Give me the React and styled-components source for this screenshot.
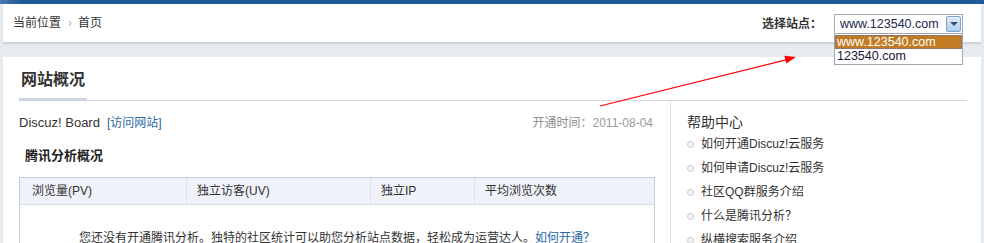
import styled, { createGlobalStyle } from 'styled-components';

const GlobalStyle = createGlobalStyle`
  body {
    margin: 0;
    background: #e8ecf1;
    font: 12px/1.5 'Liberation Sans', 'Noto Sans CJK SC', sans-serif;
    color: #333;
  }
`;

const helpItems = [
  '如何开通Discuz!云服务',
  '如何申请Discuz!云服务',
  '社区QQ群服务介绍',
  '什么是腾讯分析？',
  '纵横搜索服务介绍',
];

const columns = ['浏览量(PV)', '独立访客(UV)', '独立IP', '平均浏览次数'];

const App = () => {
  return (
    <Page>
      <GlobalStyle />
      <TopBar />
      <Wrap>
        <Header>
          <Crumbs>
            <span>当前位置</span>
            <Sep>›</Sep>
            <span>首页</span>
          </Crumbs>
          <SitePicker>
            <PickerLabel>选择站点：</PickerLabel>
            <Select>
              <SelectValue>www.123540.com</SelectValue>
              <SelectButton>
                <span />
              </SelectButton>
              <Options>
                <Option active>www.123540.com</Option>
                <Option>123540.com</Option>
              </Options>
            </Select>
          </SitePicker>
        </Header>

        <Panel>
          <TabBar>
            <Tab>网站概况</Tab>
          </TabBar>

          <Columns>
            <Main>
              <InfoRow>
                <div>
                  <BoardName>Discuz! Board</BoardName>
                  <VisitLink>[访问网站]</VisitLink>
                </div>
                <OpenDate>
                  开通时间：<span>2011-08-04</span>
                </OpenDate>
              </InfoRow>

              <SectionTitle>腾讯分析概况</SectionTitle>

              <Table>
                <HeadRow>
                  {columns.map((c) => (
                    <HeadCell key={c}>{c}</HeadCell>
                  ))}
                </HeadRow>
                <TableBody>
                  您还没有开通腾讯分析。独特的社区统计可以助您分析站点数据，轻松成为运营达人。
                  <BlueLink>如何开通？</BlueLink>
                </TableBody>
              </Table>
            </Main>

            <Side>
              <SideTitle>帮助中心</SideTitle>
              <HelpList>
                {helpItems.map((item) => (
                  <HelpItem key={item}>{item}</HelpItem>
                ))}
              </HelpList>
            </Side>
          </Columns>
        </Panel>
      </Wrap>

      <Arrow width="984" height="243" viewBox="0 0 984 243">
        <line x1="600" y1="106" x2="787" y2="59.6" stroke="#ff0000" strokeWidth="1.2" />
        <polygon points="796,57 784.3,55.8 786.3,63.6" fill="#ff0000" />
      </Arrow>
    </Page>
  );
};

const Page = styled.div`
  position: relative;
  min-height: 243px;
  overflow: hidden;
`;

const TopBar = styled.div`
  height: 4px;
  background: linear-gradient(90deg, #4a7bb0 0px, #1f5a98 20px, #1f5a98 100%);
`;

const Wrap = styled.div`
  padding: 0 3px;
`;

const Header = styled.div`
  display: flex;
  justify-content: space-between;
  align-items: center;
  height: 38px;
  padding: 0 18px 0 10px;
  background: #fff;
  box-shadow: 0 2px 2px rgba(0, 0, 0, 0.13);
`;

const Crumbs = styled.div`
  display: flex;
  align-items: center;
  font-size: 12px;
  color: #333;
`;

const Sep = styled.span`
  margin: 0 6px 0 7px;
  color: #b5b5b5;
`;

const SitePicker = styled.div`
  display: flex;
  align-items: center;
  margin-top: 2px;
`;

const PickerLabel = styled.span`
  font-weight: bold;
  color: #333;
  margin-right: 12px;
`;

const Select = styled.div`
  position: relative;
  display: flex;
  align-items: center;
  justify-content: space-between;
  box-sizing: border-box;
  width: 129px;
  height: 20px;
  border: 1px solid #a5acb6;
  background: #fff;
`;

const SelectValue = styled.span`
  padding-left: 5px;
  font-size: 12.5px;
  line-height: 18px;
  color: #23284a;
`;

const SelectButton = styled.div`
  display: flex;
  align-items: center;
  justify-content: center;
  box-sizing: border-box;
  width: 15px;
  height: 16px;
  margin-right: 1px;
  border: 1px solid #7fa5cf;
  border-radius: 2px;
  background: linear-gradient(#e2eefa, #aecdee);

  span {
    width: 0;
    height: 0;
    border-left: 4px solid transparent;
    border-right: 4px solid transparent;
    border-top: 4px solid #3b4d72;
  }
`;

const Options = styled.div`
  position: absolute;
  top: 18px;
  left: -1px;
  box-sizing: border-box;
  width: 129px;
  padding: 1px 0 1px;
  border: 1px solid #a2a8b1;
  background: #fff;
  z-index: 2;
`;

const Option = styled.div`
  height: 14px;
  padding-left: 2px;
  font-size: 12.5px;
  line-height: 14px;
  color: ${(p) => (p.active ? '#fff' : '#221436')};
  background: ${(p) => (p.active ? '#c27b22' : '#fff')};
  outline: ${(p) => (p.active ? '1px dotted #5e79ad' : 'none')};
  outline-offset: -1px;
`;

const Panel = styled.div`
  margin-top: 15px;
  padding: 0 14px 0 16px;
  background: #fff;
`;

const TabBar = styled.div`
  height: 43px;
  border-bottom: 1px solid #d3d9e3;
`;

const Tab = styled.div`
  width: 68px;
  height: 41px;
  line-height: 46px;
  text-align: center;
  font-size: 16px;
  font-weight: bold;
  color: #333;
  border-bottom: 3px solid #cdd5e2;
`;

const Columns = styled.div`
  display: flex;
  align-items: stretch;
`;

const Main = styled.div`
  width: 636px;
  margin-right: 15px;
`;

const InfoRow = styled.div`
  display: flex;
  justify-content: space-between;
  align-items: center;
  height: 24px;
  margin-top: 10px;
`;

const BoardName = styled.span`
  font-size: 13px;
  color: #333;
`;

const VisitLink = styled.a`
  margin-left: 7px;
  color: #2b66a6;
  text-decoration: none;
  cursor: pointer;
`;

const OpenDate = styled.span`
  margin-right: 2px;
  color: #8c8c8c;

  span {
    color: #999;
  }
`;

const SectionTitle = styled.div`
  height: 22px;
  margin-top: 10px;
  padding-left: 6px;
  line-height: 22px;
  font-size: 13px;
  font-weight: bold;
  color: #222;
`;

const Table = styled.div`
  margin-top: 10px;
  border: 1px solid #c4cce0;
`;

const HeadRow = styled.div`
  display: grid;
  grid-template-columns: 166px 184px 104px 1fr;
  height: 26px;
  background: #eff2f9;
  border-bottom: 1px solid #d6dcea;
`;

const HeadCell = styled.div`
  padding-left: 10px;
  line-height: 26px;
  color: #333;
  border-left: 1px solid #dde2ec;

  &:first-child {
    padding-left: 12px;
    border-left: none;
  }
`;

const TableBody = styled.div`
  padding: 23px 0 40px;
  line-height: 20px;
  text-align: center;
  color: #333;
`;

const BlueLink = styled.a`
  color: #2b66a6;
  text-decoration: none;
  cursor: pointer;
`;

const Side = styled.div`
  flex: 1;
  padding-left: 16px;
  border-left: 1px solid #dfe3ea;
`;

const SideTitle = styled.div`
  height: 20px;
  padding-top: 11px;
  line-height: 20px;
  font-size: 14px;
  color: #333;
`;

const HelpList = styled.ul`
  margin: 0;
  padding: 0;
  list-style: none;
`;

const HelpItem = styled.li`
  display: flex;
  align-items: center;
  height: 24px;
  color: #333;

  &::before {
    content: '';
    box-sizing: border-box;
    width: 7px;
    height: 7px;
    margin-right: 7px;
    border: 1px solid #c8c8c8;
    border-radius: 50%;
    background: #f1f1f1;
  }
`;

const Arrow = styled.svg`
  position: absolute;
  top: 0;
  left: 0;
  pointer-events: none;
`;

export default App;
